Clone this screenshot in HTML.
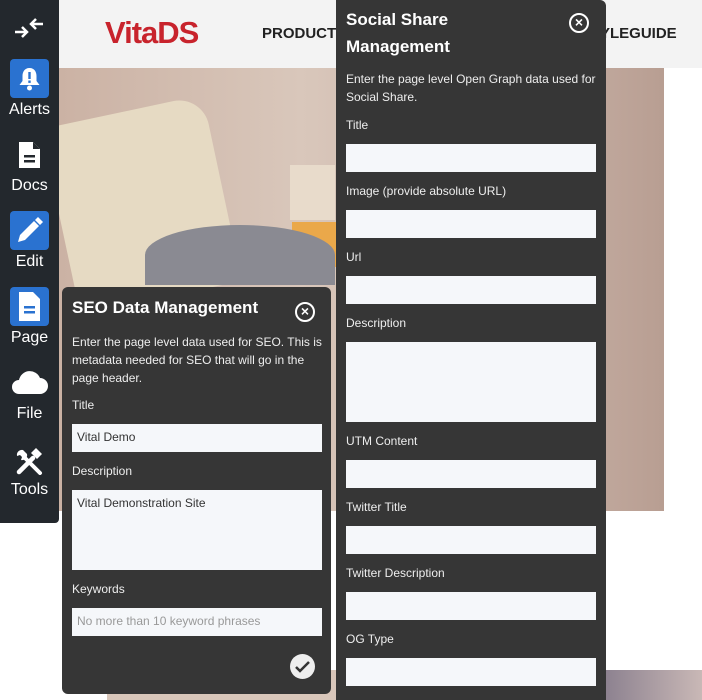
<!DOCTYPE html>
<html><head><style>
*{margin:0;padding:0;box-sizing:border-box}
body{width:702px;height:700px;overflow:hidden;background:#fff;font-family:"Liberation Sans",sans-serif;position:relative}
.abs{position:absolute}
.side{left:0;top:0;width:59px;height:523px;background:#23282d;border-radius:0 0 4px 0}
.it{position:absolute;left:0;width:59px;text-align:center;color:#fff;font-size:16px}
.ib{position:absolute;left:10px;width:39px;height:39px;border-radius:4px;background:#2a72d0}
.panel{background:#363636;color:#fff}
.lbl{position:absolute;font-size:12px;color:#eee}
.inp{position:absolute;background:#f5f7fa;font-size:12px;color:#333;padding:6px 5px}
</style></head><body>
<div class="abs" style="left:59px;top:0;width:643px;height:68px;background:#f3f3f3"></div>
<div class="abs" style="left:105px;top:15px;font-size:31px;font-weight:bold;color:#c8232c;letter-spacing:-1px">VitaDS</div>
<div class="abs" style="left:262px;top:25px;font-size:15px;font-weight:bold;color:#222">PRODUCT</div>
<div class="abs" style="left:600px;top:25px;font-size:15px;font-weight:bold;color:#222">YLEGUIDE</div>
<div class="abs" style="left:59px;top:68px;width:605px;height:443px;background:linear-gradient(90deg,#cbb2a4,#d9c7bb 40%,#c7b0a5 80%,#b89e92)"></div>
<div class="abs" style="left:59px;top:110px;width:165px;height:190px;background:#e6dac3;border-radius:10px 30px 10px 10px;transform:rotate(-12deg)"></div>
<div class="abs" style="left:290px;top:165px;width:45px;height:55px;background:#e8dbcb"></div>
<div class="abs" style="left:292px;top:222px;width:45px;height:45px;background:#eaa84a"></div>
<div class="abs" style="left:145px;top:225px;width:190px;height:60px;background:#8a8a92;border-radius:50% 50% 0 0"></div>
<div class="abs" style="left:107px;top:670px;width:229px;height:30px;background:#d8c6ba"></div>
<div class="abs" style="left:606px;top:670px;width:96px;height:30px;background:linear-gradient(90deg,#8d8290,#c9b8b6)"></div>

<div class="abs side">
<div class="abs" style="left:13px;top:17px"><svg width="32" height="22" viewBox="0 0 32 22"><path d="M2 15h12M9 10l5 5-5 5" stroke="#fff" stroke-width="2.5" fill="none"/><path d="M30 7H18M23 2l-5 5 5 5" stroke="#fff" stroke-width="2.5" fill="none"/></svg></div>
<div class="ib" style="top:59px"><svg width="39" height="39" viewBox="0 0 39 39"><path d="M19.5 9c-5 0-7 4-7 8v5l-3 4h20l-3-4v-5c0-4-2-8-7-8z" fill="#fff"/><circle cx="19.5" cy="29" r="2.5" fill="#fff"/><rect x="18.3" y="13" width="2.4" height="7" fill="#2a72d0"/><rect x="18.3" y="21.5" width="2.4" height="2.4" fill="#2a72d0"/></svg></div>
<div class="it" style="top:101px">Alerts</div>
<div class="abs" style="left:17px;top:140px"><svg width="25" height="30" viewBox="0 0 25 30"><path d="M2 2h14l7 7v19H2z" fill="#fff"/><path d="M16 2v7h7" fill="#23282d"/><rect x="7" y="15" width="11" height="2.5" fill="#23282d"/><rect x="7" y="20" width="11" height="2.5" fill="#23282d"/></svg></div>
<div class="it" style="top:177px">Docs</div>
<div class="ib" style="top:211px"><svg width="39" height="39" viewBox="0 0 39 39"><path d="M8 31l2-7 14-14 5 5-14 14z" fill="#fff"/><path d="M25 9l3-3 5 5-3 3z" fill="#fff"/></svg></div>
<div class="it" style="top:253px">Edit</div>
<div class="ib" style="top:287px"><svg width="39" height="39" viewBox="0 0 39 39"><path d="M9 5h14l7 7v22H9z" fill="#fff"/><rect x="14" y="19" width="11" height="2.5" fill="#2a72d0"/><rect x="14" y="24" width="11" height="2.5" fill="#2a72d0"/></svg></div>
<div class="it" style="top:329px">Page</div>
<div class="abs" style="left:11px;top:370px"><svg width="37" height="26" viewBox="0 0 37 26"><path d="M8 24a7 7 0 010-14 11 11 0 0121-2 8 8 0 010 16z" fill="#fff"/></svg></div>
<div class="it" style="top:405px">File</div>
<div class="abs" style="left:14px;top:445px"><svg width="30" height="30" viewBox="0 0 30 30"><path d="M5 27l14-14" stroke="#fff" stroke-width="4.5" stroke-linecap="round"/><path d="M17 8l5-5 6 6-5 5z" fill="#fff"/><path d="M9 5a5 5 0 00-6 6l3-1 2 2-1 3a5 5 0 006-6z" fill="#fff"/><path d="M11 13l15 15" stroke="#fff" stroke-width="4" stroke-linecap="round"/></svg></div>
<div class="it" style="top:481px">Tools</div>
</div>

<div class="abs panel" style="left:62px;top:287px;width:269px;height:407px;border-radius:6px">
<div class="abs" style="left:10px;top:11px;font-size:17px;font-weight:bold">SEO Data Management</div>
<div class="abs" style="left:233px;top:15px;width:20px;height:20px;border:2px solid #fff;border-radius:50%;text-align:center;line-height:15px;font-size:14px;font-weight:bold">×</div>
<div class="abs" style="left:10px;top:46px;width:255px;font-size:12px;line-height:18px;color:#eee">Enter the page level data used for SEO. This is metadata needed for SEO that will go in the page header.</div>
<div class="lbl" style="left:10px;top:111px">Title</div>
<div class="inp" style="left:10px;top:137px;width:250px;height:28px">Vital Demo</div>
<div class="lbl" style="left:10px;top:177px">Description</div>
<div class="inp" style="left:10px;top:203px;width:250px;height:80px">Vital Demonstration Site</div>
<div class="lbl" style="left:10px;top:295px">Keywords</div>
<div class="inp" style="left:10px;top:321px;width:250px;height:28px;color:#999">No more than 10 keyword phrases</div>
<div class="abs" style="left:228px;top:367px;width:25px;height:25px;border-radius:50%;background:#eee"><svg width="25" height="25"><path d="M6 13l4 4 9-9" stroke="#333" stroke-width="2.5" fill="none"/></svg></div>
</div>

<div class="abs panel" style="left:336px;top:0;width:270px;height:700px;border-radius:0 6px 0 0">
<div class="abs" style="left:10px;top:6px;font-size:17px;font-weight:bold;line-height:27px">Social Share<br>Management</div>
<div class="abs" style="left:233px;top:13px;width:20px;height:20px;border:2px solid #fff;border-radius:50%;text-align:center;line-height:15px;font-size:14px;font-weight:bold">×</div>
<div class="abs" style="left:10px;top:70px;width:255px;font-size:12px;line-height:18px;color:#eee">Enter the page level Open Graph data used for Social Share.</div>
<div class="lbl" style="left:10px;top:118px">Title</div>
<div class="inp" style="left:10px;top:144px;width:250px;height:28px"></div>
<div class="lbl" style="left:10px;top:184px">Image (provide absolute URL)</div>
<div class="inp" style="left:10px;top:210px;width:250px;height:28px"></div>
<div class="lbl" style="left:10px;top:250px">Url</div>
<div class="inp" style="left:10px;top:276px;width:250px;height:28px"></div>
<div class="lbl" style="left:10px;top:316px">Description</div>
<div class="inp" style="left:10px;top:342px;width:250px;height:80px"></div>
<div class="lbl" style="left:10px;top:434px">UTM Content</div>
<div class="inp" style="left:10px;top:460px;width:250px;height:28px"></div>
<div class="lbl" style="left:10px;top:500px">Twitter Title</div>
<div class="inp" style="left:10px;top:526px;width:250px;height:28px"></div>
<div class="lbl" style="left:10px;top:566px">Twitter Description</div>
<div class="inp" style="left:10px;top:592px;width:250px;height:28px"></div>
<div class="lbl" style="left:10px;top:632px">OG Type</div>
<div class="inp" style="left:10px;top:658px;width:250px;height:28px"></div>
</div>
</body></html>
